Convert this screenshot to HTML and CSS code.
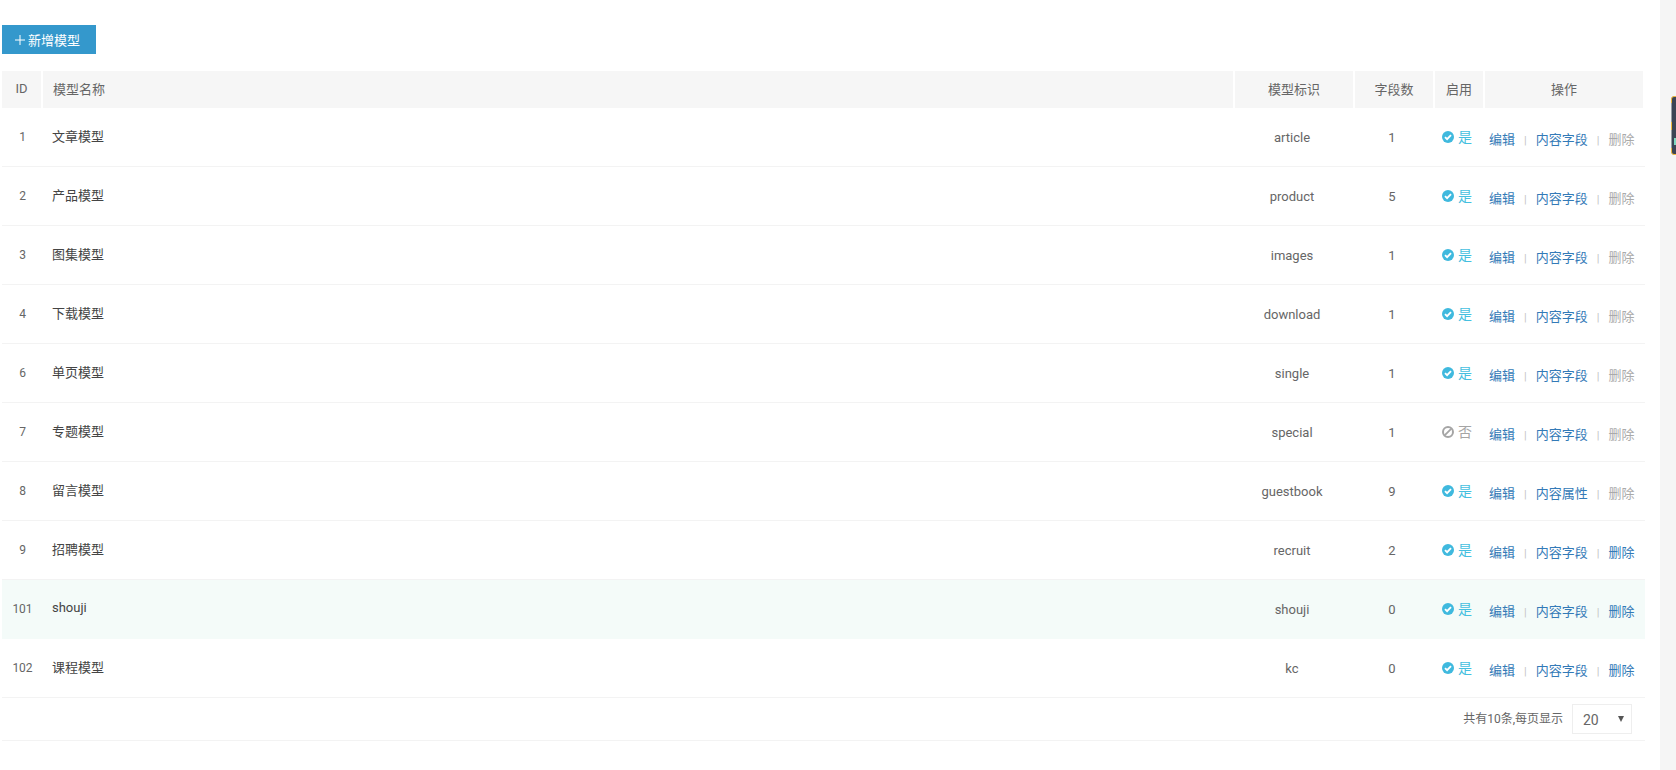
FILE: index.html
```html
<!DOCTYPE html>
<html lang="zh-CN">
<head>
    <meta charset="UTF-8">
    <title>模型管理</title>
    <link rel="stylesheet" href="styles.css">
</head>
<body>
<div class="main">
    <a class="add-btn"><svg class="plus" viewBox="0 0 10 10"><path d="M5 0v10M0 5h10" fill="none" stroke="#fff" stroke-width="1"/></svg>新增模型</a>
    <table class="list">
        <colgroup>
            <col class="c-id"><col class="c-name"><col class="c-key"><col class="c-num"><col class="c-on"><col class="c-op">
        </colgroup>
        <thead>
            <tr>
                <th>ID</th>
                <th class="left">模型名称</th>
                <th>模型标识</th>
                <th>字段数</th>
                <th>启用</th>
                <th>操作</th>
            </tr>
        </thead>
        <tbody>
            <tr>
                <td class="id">1</td><td class="name">文章模型</td><td class="val">article</td><td class="val">1</td>
                <td class="on"><svg class="ico" viewBox="0 0 12 12"><circle cx="6" cy="6" r="6" fill="#3fb9de"/><path d="M3 6.1l2.1 2.1 3.9-4" fill="none" stroke="#fff" stroke-width="1.9"/></svg>是</td>
                <td class="op"><a>编辑</a><i>|</i><a>内容字段</a><i>|</i><a class="del">删除</a></td>
            </tr>
            <tr>
                <td class="id">2</td><td class="name">产品模型</td><td class="val">product</td><td class="val">5</td>
                <td class="on"><svg class="ico" viewBox="0 0 12 12"><circle cx="6" cy="6" r="6" fill="#3fb9de"/><path d="M3 6.1l2.1 2.1 3.9-4" fill="none" stroke="#fff" stroke-width="1.9"/></svg>是</td>
                <td class="op"><a>编辑</a><i>|</i><a>内容字段</a><i>|</i><a class="del">删除</a></td>
            </tr>
            <tr>
                <td class="id">3</td><td class="name">图集模型</td><td class="val">images</td><td class="val">1</td>
                <td class="on"><svg class="ico" viewBox="0 0 12 12"><circle cx="6" cy="6" r="6" fill="#3fb9de"/><path d="M3 6.1l2.1 2.1 3.9-4" fill="none" stroke="#fff" stroke-width="1.9"/></svg>是</td>
                <td class="op"><a>编辑</a><i>|</i><a>内容字段</a><i>|</i><a class="del">删除</a></td>
            </tr>
            <tr>
                <td class="id">4</td><td class="name">下载模型</td><td class="val">download</td><td class="val">1</td>
                <td class="on"><svg class="ico" viewBox="0 0 12 12"><circle cx="6" cy="6" r="6" fill="#3fb9de"/><path d="M3 6.1l2.1 2.1 3.9-4" fill="none" stroke="#fff" stroke-width="1.9"/></svg>是</td>
                <td class="op"><a>编辑</a><i>|</i><a>内容字段</a><i>|</i><a class="del">删除</a></td>
            </tr>
            <tr>
                <td class="id">6</td><td class="name">单页模型</td><td class="val">single</td><td class="val">1</td>
                <td class="on"><svg class="ico" viewBox="0 0 12 12"><circle cx="6" cy="6" r="6" fill="#3fb9de"/><path d="M3 6.1l2.1 2.1 3.9-4" fill="none" stroke="#fff" stroke-width="1.9"/></svg>是</td>
                <td class="op"><a>编辑</a><i>|</i><a>内容字段</a><i>|</i><a class="del">删除</a></td>
            </tr>
            <tr>
                <td class="id">7</td><td class="name">专题模型</td><td class="val">special</td><td class="val">1</td>
                <td class="on off"><svg class="ico" viewBox="0 0 12 12"><circle cx="6" cy="6" r="5" fill="none" stroke="#a5a5a5" stroke-width="2"/><path d="M2.6 9.4l6.8-6.8" fill="none" stroke="#a5a5a5" stroke-width="1.8"/></svg>否</td>
                <td class="op"><a>编辑</a><i>|</i><a>内容字段</a><i>|</i><a class="del">删除</a></td>
            </tr>
            <tr>
                <td class="id">8</td><td class="name">留言模型</td><td class="val">guestbook</td><td class="val">9</td>
                <td class="on"><svg class="ico" viewBox="0 0 12 12"><circle cx="6" cy="6" r="6" fill="#3fb9de"/><path d="M3 6.1l2.1 2.1 3.9-4" fill="none" stroke="#fff" stroke-width="1.9"/></svg>是</td>
                <td class="op"><a>编辑</a><i>|</i><a>内容属性</a><i>|</i><a class="del">删除</a></td>
            </tr>
            <tr>
                <td class="id">9</td><td class="name">招聘模型</td><td class="val">recruit</td><td class="val">2</td>
                <td class="on"><svg class="ico" viewBox="0 0 12 12"><circle cx="6" cy="6" r="6" fill="#3fb9de"/><path d="M3 6.1l2.1 2.1 3.9-4" fill="none" stroke="#fff" stroke-width="1.9"/></svg>是</td>
                <td class="op"><a>编辑</a><i>|</i><a>内容字段</a><i>|</i><a>删除</a></td>
            </tr>
            <tr class="hover">
                <td class="id">101</td><td class="name">shouji</td><td class="val">shouji</td><td class="val">0</td>
                <td class="on"><svg class="ico" viewBox="0 0 12 12"><circle cx="6" cy="6" r="6" fill="#3fb9de"/><path d="M3 6.1l2.1 2.1 3.9-4" fill="none" stroke="#fff" stroke-width="1.9"/></svg>是</td>
                <td class="op"><a>编辑</a><i>|</i><a>内容字段</a><i>|</i><a>删除</a></td>
            </tr>
            <tr>
                <td class="id">102</td><td class="name">课程模型</td><td class="val">kc</td><td class="val">0</td>
                <td class="on"><svg class="ico" viewBox="0 0 12 12"><circle cx="6" cy="6" r="6" fill="#3fb9de"/><path d="M3 6.1l2.1 2.1 3.9-4" fill="none" stroke="#fff" stroke-width="1.9"/></svg>是</td>
                <td class="op"><a>编辑</a><i>|</i><a>内容字段</a><i>|</i><a>删除</a></td>
            </tr>
        </tbody>
    </table>
    <div class="pager">
        <span class="total">共有10条,每页显示</span>
        <div class="size">20</div>
    </div>
</div>
<div class="strip">
    <svg class="widget" viewBox="0 0 6 60">
        <rect x="0.5" y="0.5" width="8" height="58" rx="2" fill="#3c4454"/>
        <path d="M0.5 7V3Q0.5 .5 3 .5H6M0.5 52V56Q0.5 58.5 3 58.5H6M0.5 26V34" fill="none" stroke="#f0b73c" stroke-width="1"/>
        <rect x="3" y="42" width="3" height="7" fill="#7fd8c0"/>
    </svg>
</div>
</body>
</html>
```

FILE: styles.css
```css
*{
    margin: 0;
    padding: 0;
    box-sizing: border-box;
}
body{
    display: flex;
    height: 770px;
    overflow: hidden;
    background-color: #fff;
    font-family: Roboto, "Noto Sans CJK SC", sans-serif;
    font-size: 13px;
    color: #666;
}
.main{
    width: 1660px;
    padding: 25px 15px 0 2px;
}
.strip{
    position: relative;
    flex: 1;
    background-color: #f5f5f5;
}
.widget{
    position: absolute;
    top: 96px;
    left: 11px;
    width: 6px;
    height: 60px;
}
.add-btn{
    display: flex;
    align-items: center;
    width: 94px;
    height: 29px;
    padding-left: 13px;
    background-color: #3498cc;
    color: #fff;
}
.plus{
    width: 10px;
    height: 10px;
    margin-right: 3px;
}
.list{
    width: 100%;
    margin-top: 17px;
    border-collapse: separate;
    border-spacing: 0;
    table-layout: fixed;
}
.c-id{ width: 41px; }
.c-name{ width: 1192px; }
.c-key{ width: 120px; }
.c-num{ width: 80px; }
.c-on{ width: 50px; }
.list th{
    height: 37px;
    padding-bottom: 2px;
    background-color: #f6f6f6;
    background-clip: padding-box;
    border-right: 2px solid #fff;
    font-weight: normal;
    text-align: center;
}
.list th.left{
    padding-left: 10px;
    text-align: left;
}
.list td{
    height: 59px;
    border-bottom: 1px solid #f3f3f3;
    text-align: center;
    white-space: nowrap;
}
.list td.id{
    font-size: 12px;
}
.list td.val{
    padding-right: 6px;
}
.list td.name{
    padding: 0 0 3px 9px;
    text-align: left;
    color: #444;
}
.list tr.hover td{
    background-color: #f4fbf9;
    border-bottom-color: #f4fbf9;
}
.list td.on{
    padding: 0 0 2px 7px;
    text-align: left;
    font-size: 14px;
    color: #45bfe0;
}
.list td.off{
    color: #a5a5a5;
}
.ico{
    width: 12px;
    height: 12px;
    margin-right: 4px;
    vertical-align: -1px;
}
.list td.op{
    padding: 2px 0 0 4px;
    text-align: left;
}
.op a{
    color: #337ab7;
}
.op a.del{
    color: #aaa;
}
.op i{
    margin: 0 9px;
    font-style: normal;
    font-size: 11px;
    color: #c4c4c4;
}
.pager{
    display: flex;
    justify-content: flex-end;
    align-items: center;
    height: 43px;
    padding-right: 13px;
    border-bottom: 1px solid #f3f3f3;
    font-size: 12px;
}
.total{
    margin-bottom: 3px;
}
.size{
    position: relative;
    width: 60px;
    height: 30px;
    margin-left: 9px;
    padding-left: 10px;
    border: 1px solid #eee;
    font-size: 14px;
    line-height: 30px;
}
.size::after{
    content: "";
    position: absolute;
    top: 11px;
    right: 7px;
    border-style: solid;
    border-width: 6px 3px 0;
    border-color: #555 transparent transparent;
}
```
